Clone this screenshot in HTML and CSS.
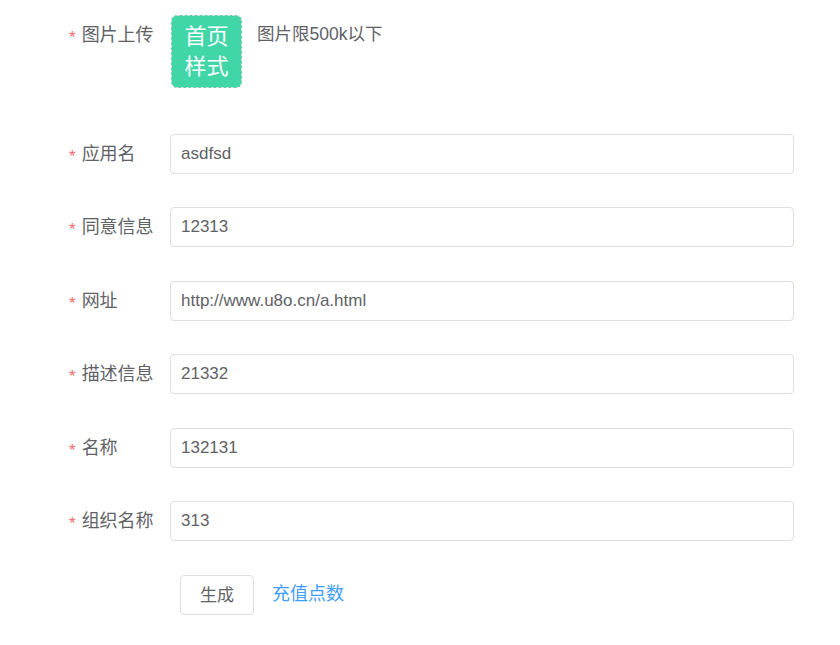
FILE: index.html
```html
<!DOCTYPE html>
<html lang="zh-Hans">
<head>
	<meta charset="UTF-8">
	<title>form</title>
	<link rel="stylesheet" href="styles.css">
</head>
<body>
	<form class="app-form">
		<div class="form-item upload-item">
			<label class="form-label required">图片上传</label>
			<div class="form-content">
				<div class="upload-box">首页<br>样式</div>
				<span class="upload-tip">图片限500k以下</span>
			</div>
		</div>
		<div class="form-item">
			<label class="form-label required">应用名</label>
			<div class="form-content"><input class="form-input" value="asdfsd"></div>
		</div>
		<div class="form-item">
			<label class="form-label required">同意信息</label>
			<div class="form-content"><input class="form-input" value="12313"></div>
		</div>
		<div class="form-item">
			<label class="form-label required">网址</label>
			<div class="form-content"><input class="form-input" value="http://www.u8o.cn/a.html"></div>
		</div>
		<div class="form-item">
			<label class="form-label required">描述信息</label>
			<div class="form-content"><input class="form-input" value="21332"></div>
		</div>
		<div class="form-item">
			<label class="form-label required">名称</label>
			<div class="form-content"><input class="form-input" value="132131"></div>
		</div>
		<div class="form-item">
			<label class="form-label required">组织名称</label>
			<div class="form-content"><input class="form-input" value="313"></div>
		</div>
		<div class="form-item actions">
			<label class="form-label"></label>
			<div class="form-content">
				<button type="button" class="btn">生成</button>
				<a class="link" href="#">充值点数</a>
			</div>
		</div>
	</form>
</body>
</html>
```
FILE: styles.css
```css
*{
	margin: 0;
	padding: 0;
	box-sizing: border-box;
}
body{
	font-family: "Liberation Sans", "Noto Sans CJK SC", sans-serif;
	color: #606266;
	background: #fff;
}
.app-form{
	width: 794px;
	padding: 15px 0 0 69px;
}
.form-item{
	display: flex;
	margin-bottom: 33.4px;
}
.upload-item{
	margin-bottom: 46px;
}
.actions{
	padding-top: 1px;
}
.form-label{
	width: 101px;
	flex: none;
	font-size: 18px;
	line-height: 40px;
	height: 40px;
	color: #606266;
}
.form-label.required:before{
	content: "*";
	color: #f56c6c;
	margin-right: 6px;
	font-size: 17px;
	position: relative;
	top: 2px;
}
.form-content{
	flex: 1;
	display: flex;
	align-items: flex-start;
}
.upload-box{
	width: 71px;
	height: 73px;
	background: #41d6a8;
	border: 1px dashed #d9d9d9;
	border-radius: 6px;
	color: #fff;
	font-size: 22px;
	line-height: 30px;
	text-align: center;
	padding-top: 6px;
	margin-left: 1px;
}
.upload-tip{
	font-size: 17.5px;
	line-height: 40px;
	margin-left: 15px;
	margin-top: -1px;
}
.form-input{
	width: 100%;
	height: 40px;
	border: 1px solid #dcdfe6;
	border-radius: 4px;
	padding: 0 10px;
	font-family: inherit;
	font-size: 17px;
	color: #606266;
	outline: none;
}
.btn{
	width: 74px;
	height: 40px;
	margin-left: 10px;
	padding-bottom: 4px;
	border: 1px solid #dcdfe6;
	border-radius: 4px;
	background: #fff;
	font-family: inherit;
	font-size: 17px;
	color: #606266;
}
.link{
	margin-left: 18px;
	font-size: 18px;
	line-height: 38px;
	color: #409eff;
	text-decoration: none;
}
```
